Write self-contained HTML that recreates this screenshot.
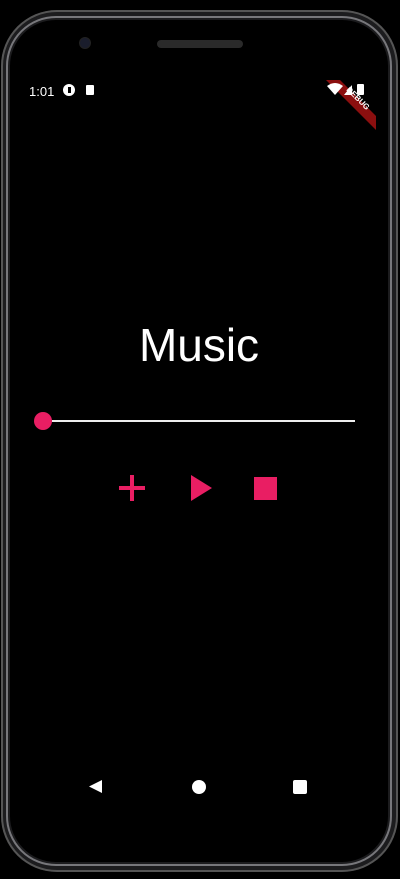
<!DOCTYPE html>
<html><head><style>
html,body{margin:0;padding:0;background:#000;width:400px;height:879px;overflow:hidden;font-family:"Liberation Sans",sans-serif}
.outer{position:absolute;left:1px;top:10px;width:397px;height:862px;border-radius:56px;background:#1c1c1e;box-shadow:inset 0 0 0 2px #555}
.ring{position:absolute;left:6px;top:16px;width:386px;height:850px;border-radius:50px;border:2px solid #77777b;box-sizing:border-box}
.screen{position:absolute;left:10px;top:20px;width:378px;height:842px;border-radius:46px;background:#000}
.t{position:absolute;color:#fff}
</style></head><body>
<div class="outer"></div><div class="ring"></div><div class="screen"></div>
<div style="position:absolute;left:80px;top:38px;width:10px;height:10px;border-radius:50%;background:#1a1d2c;box-shadow:0 0 0 1px #222"></div>
<div style="position:absolute;left:157px;top:40px;width:86px;height:8px;border-radius:4px;background:#2a2a2a"></div>
<div class="t" style="left:29px;top:84px;font-size:13px">1:01</div>
<div style="position:absolute;left:63px;top:84px;width:12px;height:12px;border-radius:50%;background:#fff"></div>
<div style="position:absolute;left:68px;top:87px;width:3px;height:6px;background:#000"></div>
<div style="position:absolute;left:86px;top:85px;width:8px;height:10px;background:#fff;border-radius:1px"></div>
<svg style="position:absolute;left:326px;top:80px" width="50" height="52">
<polygon points="0,0 14,0 50,36 50,50" fill="#8b0f0f"/>
<text x="0" y="0" transform="translate(20,10) rotate(45)" fill="#fff" font-size="8" font-weight="bold" font-family="Liberation Sans">DEBUG</text>
<path d="M1 6 Q9 0 17 6 L9 15Z" fill="#fff"/>
<path d="M18 15 L26 5 L26 15Z" fill="#fff"/>
<rect x="31" y="4" width="7" height="11" rx="1" fill="#fff"/>
</svg>
<div class="t" style="left:0;width:398px;text-align:center;top:318px;font-size:46px">Music</div>
<div style="position:absolute;left:52px;top:420px;width:303px;height:2px;background:#eee"></div>
<div style="position:absolute;left:34px;top:412px;width:18px;height:18px;border-radius:50%;background:#e91e63"></div>
<div style="position:absolute;left:119px;top:486px;width:26px;height:4px;background:#e91e63"></div>
<div style="position:absolute;left:130px;top:475px;width:4px;height:26px;background:#e91e63"></div>
<svg style="position:absolute;left:191px;top:475px" width="21" height="26"><path d="M0 0 L21 13 L0 26Z" fill="#e91e63"/></svg>
<div style="position:absolute;left:254px;top:477px;width:23px;height:23px;background:#e91e63"></div>
<svg style="position:absolute;left:88px;top:779px" width="15" height="15"><path d="M14 1 L14 14 L1 7.5Z" fill="#fff"/></svg>
<div style="position:absolute;left:192px;top:780px;width:14px;height:14px;border-radius:50%;background:#fff"></div>
<div style="position:absolute;left:293px;top:780px;width:14px;height:14px;border-radius:2px;background:#fff"></div>
</body></html>
